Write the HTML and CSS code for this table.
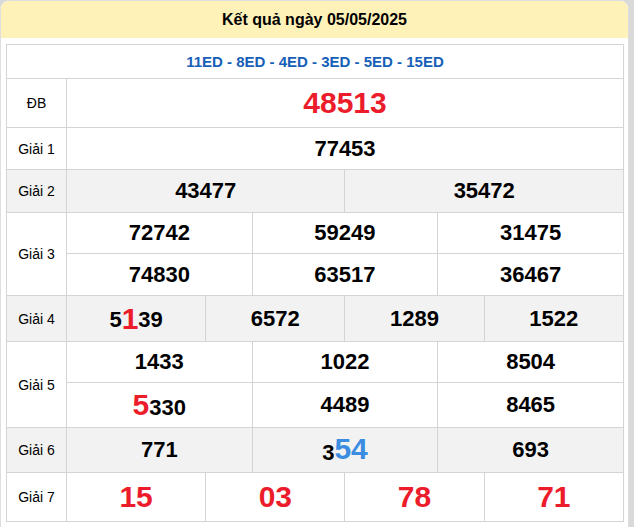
FILE: index.html
```html
<!DOCTYPE html>
<html lang="vi">
<head>
<meta charset="utf-8">
<title>Kết quả ngày 05/05/2025</title>
<link rel="stylesheet" href="styles.css">
</head>
<body>
<div class="card">
  <div class="card-head">Kết quả ngày 05/05/2025</div>
  <table class="kq">
    <colgroup>
      <col class="c-label">
      <col><col><col><col><col><col><col><col><col><col><col><col>
    </colgroup>
    <tr class="r-code">
      <td colspan="13" class="codes">11ED - 8ED - 4ED - 3ED - 5ED - 15ED</td>
    </tr>
    <tr class="r-db">
      <td class="lbl">ĐB</td>
      <td colspan="12" class="num big red">48513</td>
    </tr>
    <tr class="r-g1">
      <td class="lbl">Giải 1</td>
      <td colspan="12" class="num">77453</td>
    </tr>
    <tr class="r-g2 gray">
      <td class="lbl">Giải 2</td>
      <td colspan="6" class="num">43477</td>
      <td colspan="6" class="num">35472</td>
    </tr>
    <tr class="r-g3a">
      <td class="lbl" rowspan="2">Giải 3</td>
      <td colspan="4" class="num">72742</td>
      <td colspan="4" class="num">59249</td>
      <td colspan="4" class="num">31475</td>
    </tr>
    <tr class="r-g3b">
      <td colspan="4" class="num">74830</td>
      <td colspan="4" class="num">63517</td>
      <td colspan="4" class="num">36467</td>
    </tr>
    <tr class="r-g4 gray">
      <td class="lbl">Giải 4</td>
      <td colspan="3" class="num">5<span class="hl red mid">1</span>39</td>
      <td colspan="3" class="num">6572</td>
      <td colspan="3" class="num">1289</td>
      <td colspan="3" class="num">1522</td>
    </tr>
    <tr class="r-g5a">
      <td class="lbl" rowspan="2">Giải 5</td>
      <td colspan="4" class="num">1433</td>
      <td colspan="4" class="num">1022</td>
      <td colspan="4" class="num">8504</td>
    </tr>
    <tr class="r-g5b">
      <td colspan="4" class="num"><span class="hl red">5</span>330</td>
      <td colspan="4" class="num">4489</td>
      <td colspan="4" class="num">8465</td>
    </tr>
    <tr class="r-g6 gray">
      <td class="lbl">Giải 6</td>
      <td colspan="4" class="num">771</td>
      <td colspan="4" class="num">3<span class="hl blue up">54</span></td>
      <td colspan="4" class="num">693</td>
    </tr>
    <tr class="r-g7">
      <td class="lbl">Giải 7</td>
      <td colspan="3" class="num big red">15</td>
      <td colspan="3" class="num big red">03</td>
      <td colspan="3" class="num big red">78</td>
      <td colspan="3" class="num big red">71</td>
    </tr>
  </table>
</div>
</body>
</html>
```

FILE: styles.css
```css
html, body {
  margin: 0;
  padding: 0;
}
body {
  background: #d9d9d9;
  font-family: "Liberation Sans", Arial, sans-serif;
  color: #000;
}
.card {
  box-sizing: border-box;
  width: 629px;
  background: #fff;
  border: 1px solid #dedede;
  border-radius: 9px 9px 0 0;
  padding: 0 4px 10px 5px;
  overflow: hidden;
}
.card-head {
  margin: 0 -4px 0 -5px;
  height: 37px;
  background: #fff2b8;
  text-align: center;
  font-weight: bold;
  font-size: 16px;
  line-height: 37px;
}
.kq {
  margin-top: 6px;
  width: 618px;
  border-collapse: collapse;
  table-layout: fixed;
}
.kq col.c-label {
  width: 60px;
}
.kq td {
  border: 1px solid #d4d4d4;
  padding: 0;
  text-align: center;
  vertical-align: middle;
}
.gray td {
  background: #f2f2f2;
}
.codes {
  color: #1760b8;
  font-weight: bold;
  font-size: 15px;
}
.lbl {
  font-size: 14px;
}
.num {
  font-weight: bold;
  font-size: 22px;
}
.big {
  font-size: 30px;
}
.hl {
  font-size: 30px;
  line-height: 1;
}
.hl.mid {
  vertical-align: -2px;
}
.hl.up {
  vertical-align: 1px;
}
.red {
  color: #ec1c2b;
}
.blue {
  color: #3a8de0;
}
.r-code td { height: 33px; }
.r-db td { height: 48px; }
.r-g1 td { height: 41px; }
.r-g2 td { height: 42px; }
.r-g3a td { height: 40px; }
.r-g3b td { height: 41px; }
.r-g4 td { height: 45px; }
.r-g5a td { height: 40px; }
.r-g5b td { height: 44px; }
.r-g6 td { height: 44px; }
.r-g7 td { height: 48px; }
```
